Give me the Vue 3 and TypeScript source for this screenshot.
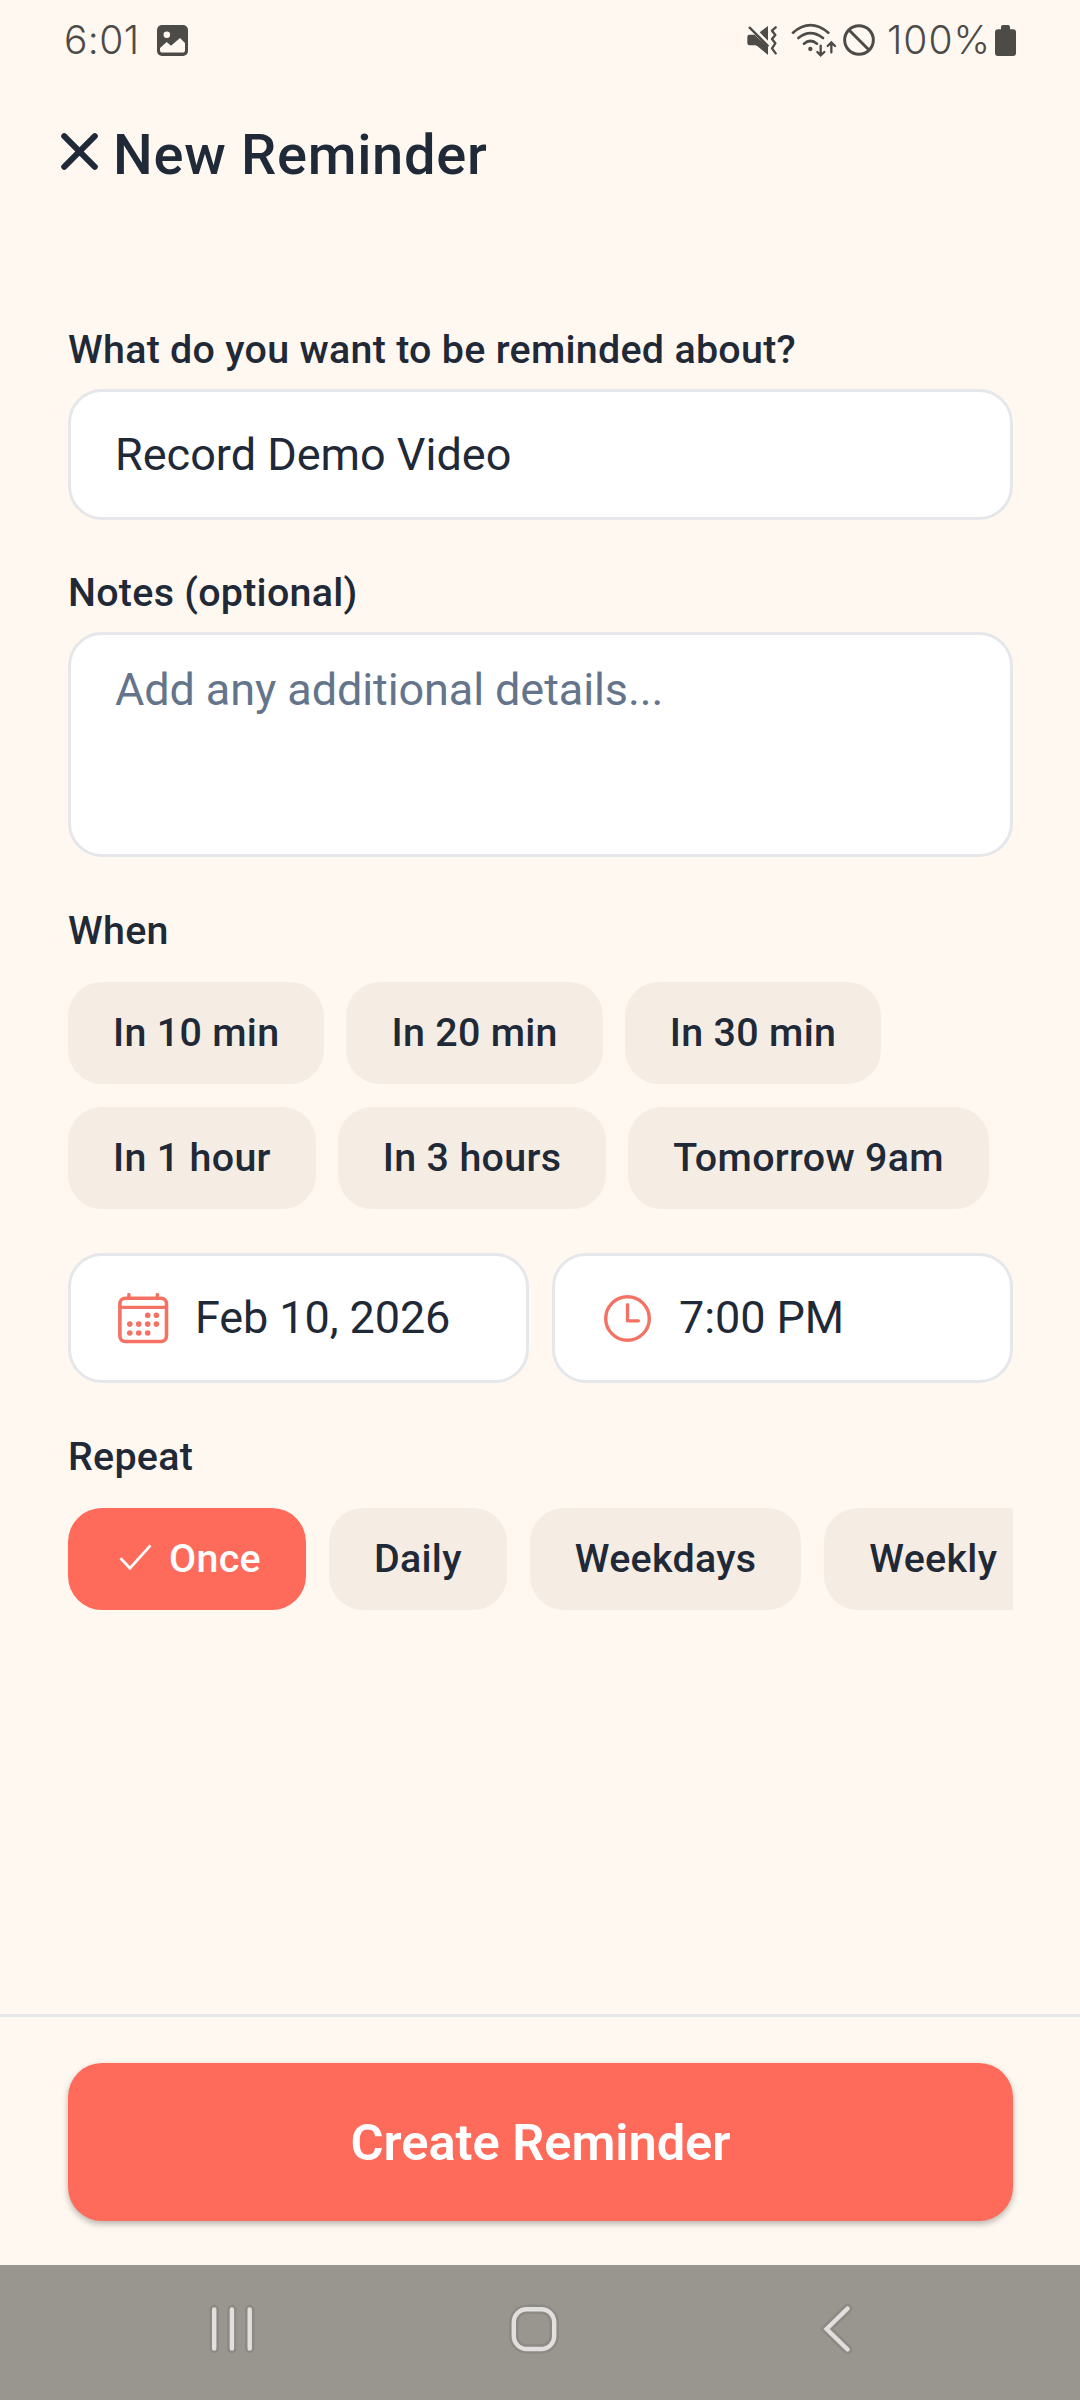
<script setup lang="ts">
import { ref } from 'vue'

const title = ref('Record Demo Video')
const notes = ref('')
const presetRows: string[][] = [
  ['In 10 min', 'In 20 min', 'In 30 min'],
  ['In 1 hour', 'In 3 hours', 'Tomorrow 9am'],
]
const repeats: string[] = ['Once', 'Daily', 'Weekdays', 'Weekly']
const selected = ref('Once')
const calendarDots: [number, number][] = [
  [29.7, 22.3], [38.4, 22.3],
  [11.8, 31.1], [20.7, 31.1], [29.7, 31.1], [38.4, 31.1],
  [11.8, 40], [20.7, 40], [29.7, 40],
]
</script>

<template>
  <div class="screen">
    <header class="status">
      <span class="clock">6:01</span>
      <svg class="picture" width="31" height="31" viewBox="0 0 31 31">
        <rect width="31" height="31" rx="5" fill="#4d4b48" />
        <circle cx="9.8" cy="9.8" r="3.3" fill="#fff8f0" />
        <path d="M3 23L9.7 17L14 20.7L23 13L28 18V25Q28 27.6 25.5 27.6H5.5Q3 27.6 3 25Z" fill="#fff8f0" />
      </svg>
      <span class="spacer"></span>
      <svg class="mute" width="30" height="32" viewBox="80 74 90 96">
        <path d="M86 106H103L143 146V166L110 138H90Q81 138 81 130V115Q81 106 86 106Z" fill="#4d4b48" />
        <path d="M100 106L143 142V166L108 138Z" fill="#4d4b48" />
        <path d="M118 99L143 80V124Z" fill="#4d4b48" />
        <path d="M88 85L142 139" stroke="#4d4b48" stroke-width="7" stroke-linecap="round" />
        <path d="M166 84L155 94L165 107L155 119L165 132L155 147L166 162" fill="none" stroke="#4d4b48" stroke-width="7" stroke-linejoin="round" stroke-linecap="round" />
      </svg>
      <svg class="wifi" width="46" height="34" viewBox="210 70 138 102">
        <g fill="none" stroke="#4d4b48" stroke-width="8" stroke-linecap="round">
          <path d="M216 99Q268 54 322 99" />
          <path d="M232 115Q268 86 306 115" />
          <path d="M249 132Q268 116 288 132" />
          <path d="M299 138V166M289 157L299 167L310 157" stroke-width="7" />
          <path d="M331 158V129M320 139L331 128L342 139" stroke-width="7" />
        </g>
        <circle cx="268" cy="148" r="6.5" fill="#4d4b48" />
      </svg>
      <svg class="blocked" width="32" height="32" viewBox="368 70 96 96">
        <circle cx="416" cy="118" r="43" fill="none" stroke="#4d4b48" stroke-width="9" />
        <path d="M386 88L446 148" stroke="#4d4b48" stroke-width="9" />
      </svg>
      <span class="percent">100%</span>
      <svg class="battery" width="21" height="31" viewBox="0 0 21 31">
        <path d="M6 4.3V2Q6 0 8 0H13Q15 0 15 2V4.3H18Q21 4.3 21 7.3V28Q21 31 18 31H3Q0 31 0 28V7.3Q0 4.3 3 4.3Z" fill="#4d4b48" />
      </svg>
    </header>

    <div class="titlebar">
      <svg width="37" height="37" viewBox="0 0 37 37">
        <path d="M3.2 3.2L33.8 33.8M33.8 3.2L3.2 33.8" stroke="#1f2937" stroke-width="6" stroke-linecap="round" />
      </svg>
      <h1>New Reminder</h1>
    </div>

    <main class="form">
      <label class="label">What do you want to be reminded about?</label>
      <input v-model="title" class="field" type="text" />

      <label class="label spaced">Notes (optional)</label>
      <textarea v-model="notes" class="field notes" placeholder="Add any additional details..."></textarea>

      <div class="label spaced when">When</div>
      <div class="presets">
        <div v-for="(row, i) in presetRows" :key="i" class="row">
          <button v-for="p in row" :key="p" class="chip">{{ p }}</button>
        </div>
      </div>

      <div class="pickers">
        <div class="picker">
          <svg width="51" height="51" viewBox="0 0 51 51">
            <rect x="1.9" y="5.2" width="46.6" height="43.3" rx="5.5" fill="none" stroke="#f47264" stroke-width="3.6" />
            <path d="M2 14.4H48.5M10.9 1.6V5M39.4 1.6V5" stroke="#f47264" stroke-width="3.4" stroke-linecap="round" />
            <circle v-for="([x, y], i) in calendarDots" :key="i" :cx="x" :cy="y" r="2.8" fill="#f47264" />
          </svg>
          <span>Feb 10, 2026</span>
        </div>
        <div class="picker time">
          <svg width="47" height="47" viewBox="0 0 47 47">
            <circle cx="23.5" cy="23.5" r="21.8" fill="none" stroke="#f47264" stroke-width="3.4" />
            <path d="M23.5 9.6V25.8H34.4" fill="none" stroke="#f47264" stroke-width="3.3" stroke-linecap="round" stroke-linejoin="round" />
          </svg>
          <span>7:00 PM</span>
        </div>
      </div>

      <div class="label spaced when">Repeat</div>
      <div class="row repeat">
        <button v-for="r in repeats" :key="r" class="chip" :class="{ active: r === selected }" @click="selected = r">
          <svg v-if="r === selected" class="check" width="33" height="28" viewBox="0 0 33 28">
            <path d="M1.5 14.2L11 24.2L31.5 1.4" fill="none" stroke="#fff" stroke-width="2.7" />
          </svg>{{ r }}
        </button>
      </div>
    </main>

    <footer class="actions">
      <button class="submit">Create Reminder</button>
    </footer>

    <nav class="nav">
      <svg width="1080" height="135" viewBox="0 0 1080 135" fill="none" stroke-linecap="round">
        <g v-for="pass in 2" :key="pass" :stroke="pass === 1 ? '#8d8a84' : '#e2e0de'" :stroke-width="pass === 1 ? 9.5 : 4.4">
          <path d="M214.2 44.5V83.5M231.9 44.5V83.5M249.7 44.5V83.5" />
          <rect x="513.8" y="44.2" width="40.4" height="39.8" rx="13" />
          <path d="M847.6 43.5L826.6 64L847.6 84.5" />
        </g>
      </svg>
    </nav>
  </div>
</template>

<style>
body {
  margin: 0;
  background: #fff8f0;
}
</style>

<style scoped>
.screen {
  width: 1080px;
  height: 2400px;
  display: flex;
  flex-direction: column;
  overflow: hidden;
  background: #fff8f0;
  color: #1f2937;
  font-family: Roboto, "Liberation Sans", sans-serif;
}
svg {
  display: block;
  flex: none;
}
button {
  border: 0;
  font: inherit;
  color: inherit;
}
.status {
  height: 80px;
  box-sizing: border-box;
  padding: 0 64px;
  display: flex;
  align-items: center;
  color: #4d4b48;
  font-family: Inter, Roboto, sans-serif;
  font-weight: 350;
  font-size: 39px;
}
.clock,
.percent {
  line-height: 80px;
  white-space: nowrap;
}
.clock {
  width: 93px;
  letter-spacing: 0.4px;
}
.picture {
  width: 31px;
}
.spacer {
  flex: 1;
}
.wifi {
  margin-left: 14px;
}
.blocked {
  margin-left: 6px;
}
.percent {
  width: 108px;
  margin-left: 12px;
  flex: none;
  letter-spacing: 1px;
}
.titlebar {
  height: 246px;
  box-sizing: border-box;
  padding: 41px 0 0 61px;
  display: flex;
  align-items: flex-start;
}
.titlebar svg {
  margin-top: 12px;
}
.titlebar h1 {
  margin: 1px 0 0 15px;
  font-size: 56px;
  font-weight: 500;
  line-height: 66px;
  letter-spacing: 0.7px;
}
.form {
  flex: 1;
  width: 945px;
  margin-left: 68px;
  display: flex;
  flex-direction: column;
}
.label {
  height: 47px;
  margin-bottom: 16px;
  font-size: 39.4px;
  font-weight: 500;
  line-height: 47px;
  letter-spacing: 0.28px;
}
.label.spaced {
  margin-top: 49px;
}
.label.when {
  margin-top: 50px;
  margin-bottom: 28px;
}
.field {
  width: 945px;
  height: 131px;
  box-sizing: border-box;
  margin: 0;
  padding: 0 44px;
  border: 3px solid #e5e7eb;
  border-radius: 34px;
  outline: none;
  background: #fff;
  color: #1f2937;
  font: 400 45px/53px Roboto, "Liberation Sans", sans-serif;
}
.notes {
  height: 225px;
  padding: 28px 44px;
  resize: none;
  overflow: hidden;
  letter-spacing: -0.1px;
}
.field::placeholder {
  color: #64748b;
}
.presets {
  display: flex;
  flex-direction: column;
  gap: 23px;
}
.row {
  display: flex;
  gap: 22px;
}
.repeat {
  gap: 23px;
  overflow: hidden;
}
.chip {
  height: 102px;
  padding: 0 45px 2px;
  flex: none;
  display: flex;
  align-items: center;
  border-radius: 34px;
  background: #f5ede3;
  font-size: 39.4px;
  font-weight: 500;
  line-height: 47px;
  letter-spacing: 0.3px;
  white-space: nowrap;
}
.chip.active {
  background: #ff6b5b;
  color: #fff;
}
.check {
  margin: 0 17px 0 6px;
}
.pickers {
  margin-top: 44px;
  display: flex;
  gap: 23px;
}
.picker {
  width: 461px;
  height: 130px;
  box-sizing: border-box;
  padding-left: 47px;
  display: flex;
  align-items: center;
  border: 3px solid #e5e7eb;
  border-radius: 34px;
  background: #fff;
  font-size: 45px;
  line-height: 53px;
  letter-spacing: -0.1px;
}
.picker span {
  margin: 0 0 1px 26px;
  white-space: nowrap;
}
.picker.time {
  padding-left: 49px;
}
.picker.time span {
  margin-left: 28px;
}
.actions {
  height: 251px;
  box-sizing: border-box;
  border-top: 3px solid #e5e7eb;
  padding: 46px 67px 0 68px;
}
.submit {
  width: 100%;
  height: 158px;
  padding: 2px 0 0;
  border-radius: 34px;
  background: #ff6b5b;
  box-shadow: 0 3px 6px rgba(0, 0, 0, 0.28);
  color: #fff;
  font-size: 50.6px;
  font-weight: 600;
  line-height: 60px;
  letter-spacing: -0.05px;
}
.nav {
  height: 135px;
  background: #999690;
}
</style>
